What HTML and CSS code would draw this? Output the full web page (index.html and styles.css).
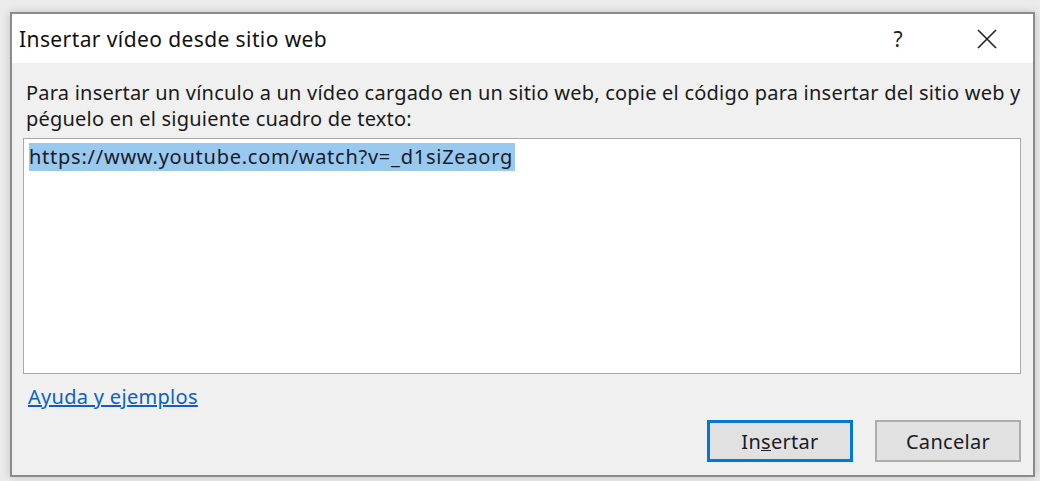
FILE: index.html
```html
<!DOCTYPE html>
<html lang="es">
<head>
<meta charset="utf-8">
<title>Insertar vídeo desde sitio web</title>
<link rel="stylesheet" href="styles.css">
</head>
<body>
  <div class="dialog">
    <div class="titlebar">
      <span class="title">Insertar vídeo desde sitio web</span>
      <span class="help">?</span>
      <span class="close">
        <svg width="20" height="20" viewBox="0 0 20 20"><path d="M1 1 L19 19 M19 1 L1 19" stroke="#222" stroke-width="1.6" fill="none"/></svg>
      </span>
    </div>
    <div class="content">
      <p class="intro">Para insertar un vínculo a un vídeo cargado en un sitio web, copie el código para insertar del sitio web y péguelo en el siguiente cuadro de texto:</p>
      <div class="codebox"><span class="sel">https://www.youtube.com/watch?v=_d1siZeaorg</span></div>
      <a class="link" href="#">Ayuda y ejemplos</a>
      <div class="actions">
        <button class="btn primary">In<u>s</u>ertar</button>
        <button class="btn">Cancelar</button>
      </div>
    </div>
  </div>
</body>
</html>
```
FILE: styles.css
```css
html, body {
  margin: 0;
  height: 100%;
}

body {
  background: #ebebeb;
  padding: 12px 5px 4px 10px;
  box-sizing: border-box;
  font-family: "Noto Sans", "Open Sans", sans-serif;
  color: #1a1a1a;
}

.dialog {
  width: 1025px;
  height: 465px;
  box-sizing: border-box;
  border: 2px solid #8a8a8a;
  background: #f0f0f0;
  box-shadow: 0 0 8px rgba(0, 0, 0, 0.18);
  display: flex;
  flex-direction: column;
}

.titlebar {
  height: 49px;
  background: #fff;
  display: flex;
  align-items: center;
  padding-left: 7px;
  flex-shrink: 0;
}

.title {
  flex: 1;
  font-size: 21px;
  letter-spacing: 0.4px;
  color: #111;
}

.help {
  width: 28px;
  font-size: 21px;
  text-align: center;
  color: #222;
  margin-right: 61px;
}

.close {
  width: 28px;
  display: flex;
  justify-content: center;
  margin-right: 32px;
}

.content {
  flex: 1;
  padding: 17px 12px 13px 11px;
  display: flex;
  flex-direction: column;
}

.intro {
  margin: 0 -6px 6px 3px;
  font-size: 20px;
  letter-spacing: 0.22px;
  line-height: 26px;
  color: #1a1a1a;
}

.codebox {
  height: 236px;
  box-sizing: border-box;
  background: #fff;
  border: 1px solid #a9a9a9;
  padding: 5px 5px;
  font-size: 20px;
  letter-spacing: 0.75px;
  line-height: 25px;
  color: #1a1a2a;
}

.sel {
  background: #99c9ef;
  padding: 0 2px 1px 0;
}

.link {
  align-self: flex-start;
  margin: 9px 0 0 5px;
  font-size: 20px;
  letter-spacing: 0.3px;
  color: #0a5fd0;
  text-decoration: underline;
}

.actions {
  margin-top: auto;
  display: flex;
  justify-content: flex-end;
  gap: 22px;
}

.btn {
  width: 146px;
  height: 42px;
  box-sizing: border-box;
  background: #e1e1e1;
  border: 2px solid #adadad;
  font-family: inherit;
  font-size: 20px;
  letter-spacing: 0.3px;
  color: #1a1a2a;
  padding: 0;
}

.btn.primary {
  border: 3px solid #0078d7;
}

.btn u {
  text-decoration-thickness: 1px;
}
```
